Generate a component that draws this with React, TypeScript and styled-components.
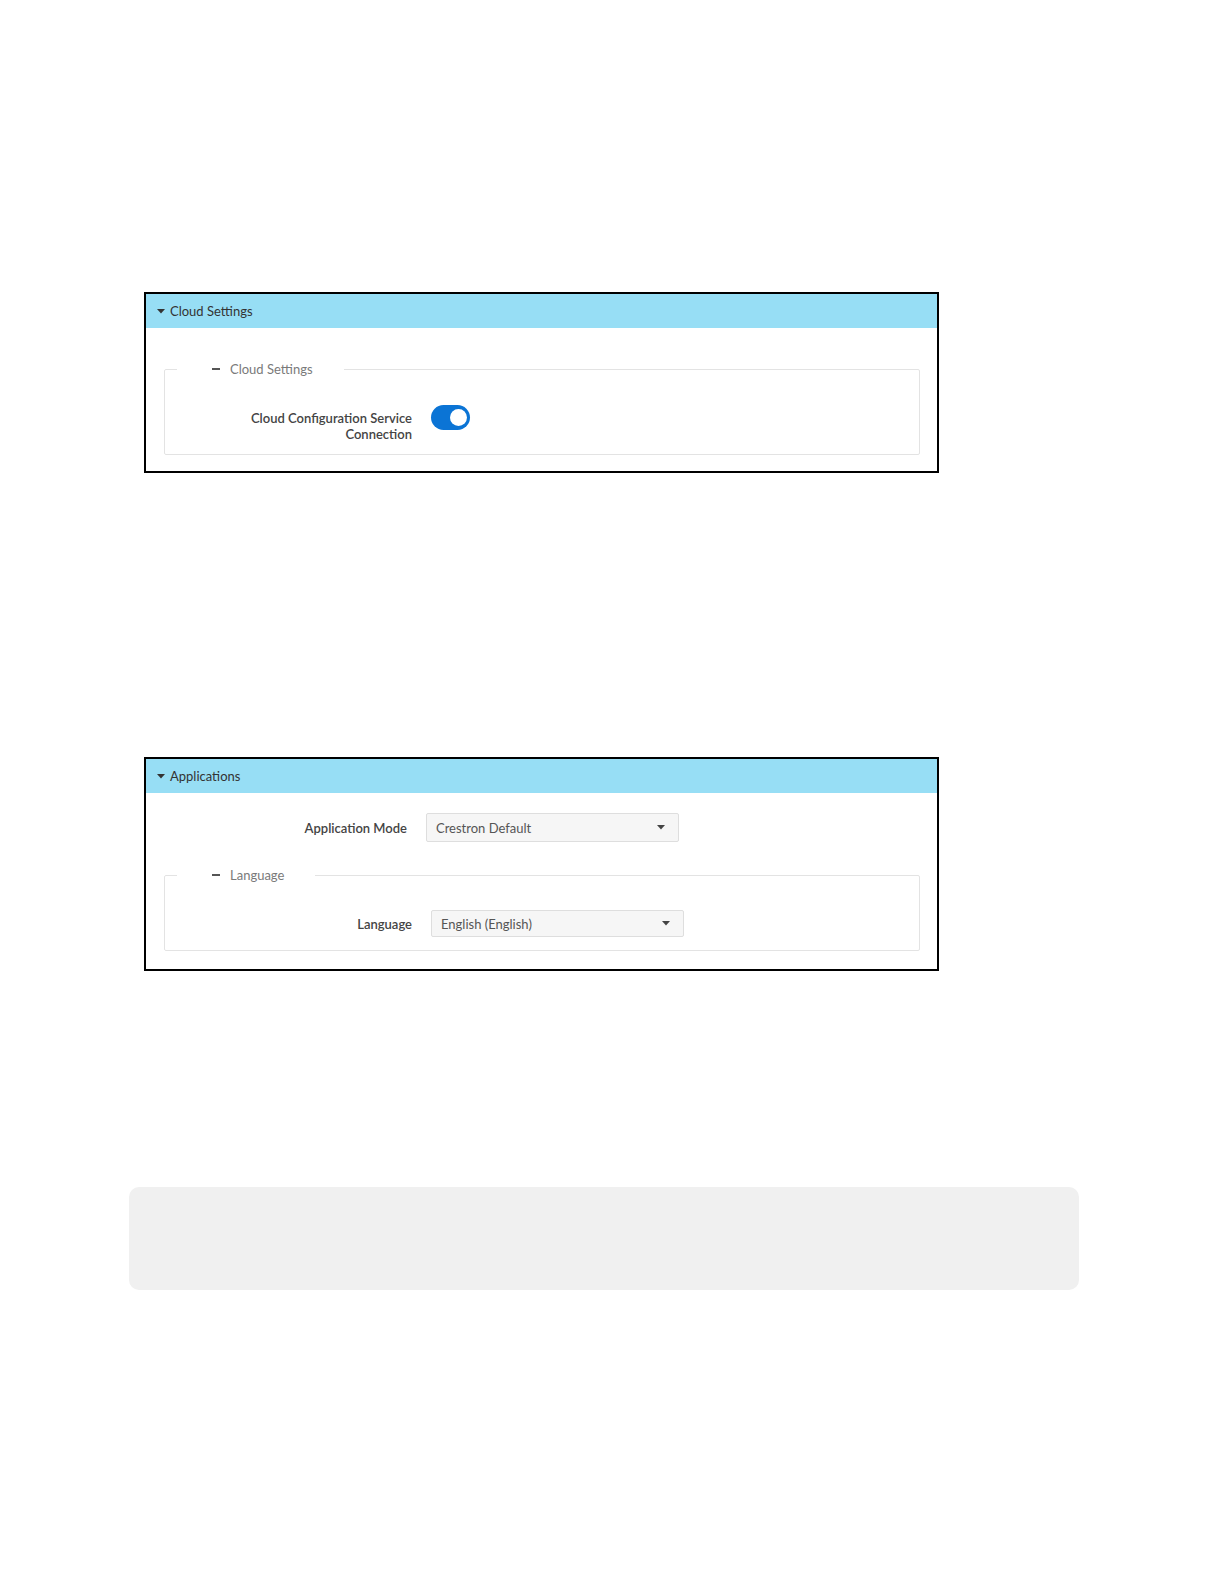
import styled, { createGlobalStyle } from "styled-components";

const GlobalStyle = createGlobalStyle`
  body {
    margin: 0;
    background: #ffffff;
    font-family: Lato, "Open Sans", sans-serif;
    color: #333333;
  }
`;

const Page = styled.div`
  display: flex;
  flex-direction: column;
  padding-top: 292px;
  min-height: 1584px;
  box-sizing: border-box;
`;

const Panel = styled.section<{ $gapAfter: number }>`
  width: 795px;
  margin-left: 144px;
  margin-bottom: ${(p) => p.$gapAfter}px;
  border: 2px solid #000000;
  box-sizing: border-box;
  background: #ffffff;
`;

const PanelHeader = styled.div`
  height: 34px;
  display: flex;
  align-items: center;
  gap: 5px;
  padding-left: 11px;
  background: #97def5;
  font-size: 13px;
  color: #333333;
`;

const PanelBody = styled.div<{ $padTop: number; $padBottom: number }>`
  padding: ${(p) => p.$padTop}px 17px ${(p) => p.$padBottom}px 18px;
`;

const Group = styled.fieldset<{ $marginTop?: number; $padTop: number; $padBottom: number }>`
  margin: ${(p) => p.$marginTop ?? 0}px 0 0 0;
  padding: ${(p) => p.$padTop}px 0 ${(p) => p.$padBottom}px 0;
  border: 1px solid #e3e3e3;
  border-radius: 2px;
  min-width: 0;
`;

const GroupLegend = styled.legend`
  margin-left: 12px;
  padding: 0 31px 0 35px;
  display: flex;
  align-items: center;
  gap: 10px;
  font-size: 13px;
  line-height: 16px;
  color: #7a7a7a;
`;

const Dash = styled.span`
  display: inline-block;
  width: 8px;
  height: 2px;
  background: #555555;
`;

const Row = styled.div<{ $labelWidth: number; $align?: string }>`
  display: grid;
  grid-template-columns: ${(p) => p.$labelWidth}px auto;
  column-gap: 19px;
  align-items: ${(p) => p.$align ?? "center"};
`;

const Label = styled.div`
  text-align: right;
  font-size: 13px;
  line-height: 16px;
  font-weight: 600;
  color: #444444;
`;

const Toggle = styled.div<{ $on: boolean }>`
  width: 39px;
  height: 25px;
  margin-top: -5px;
  box-sizing: border-box;
  border-radius: 13px;
  padding: 0 3px;
  display: flex;
  align-items: center;
  justify-content: ${(p) => (p.$on ? "flex-end" : "flex-start")};
  background: ${(p) => (p.$on ? "#0b74d5" : "#c8c8c8")};
`;

const Knob = styled.span`
  width: 17px;
  height: 17px;
  border-radius: 50%;
  background: #ffffff;
`;

const Select = styled.div<{ $height: number }>`
  width: 253px;
  height: ${(p) => p.$height}px;
  box-sizing: border-box;
  display: flex;
  align-items: center;
  justify-content: space-between;
  padding: 0 13px 0 9px;
  background: #f6f6f6;
  border: 1px solid #dedede;
  border-radius: 2px;
  font-size: 13px;
  color: #555555;
`;

const NoteBox = styled.div`
  width: 950px;
  height: 103px;
  margin-left: 129px;
  border-radius: 10px;
  background: #f0f0f0;
`;

function Caret({ color = "#333333" }: { color?: string }) {
  return (
    <svg width="8" height="5" viewBox="0 0 8 5">
      <path d="M0 0 L8 0 L4 4.5 Z" fill={color} />
    </svg>
  );
}

export default function App() {
  return (
    <>
      <GlobalStyle />
      <Page>
        <Panel $gapAfter={284}>
          <PanelHeader>
            <Caret />
            <span>Cloud Settings</span>
          </PanelHeader>
          <PanelBody $padTop={33} $padBottom={16}>
            <Group $padTop={33} $padBottom={12}>
              <GroupLegend>
                <Dash />
                Cloud Settings
              </GroupLegend>
              <Row $labelWidth={247} $align="start">
                <Label>
                  Cloud Configuration Service
                  <br />
                  Connection
                </Label>
                <Toggle $on>
                  <Knob />
                </Toggle>
              </Row>
            </Group>
          </PanelBody>
        </Panel>

        <Panel $gapAfter={216}>
          <PanelHeader>
            <Caret />
            <span>Applications</span>
          </PanelHeader>
          <PanelBody $padTop={20} $padBottom={18}>
            <Row $labelWidth={243}>
              <Label>Application Mode</Label>
              <Select $height={29}>
                <span>Crestron Default</span>
                <Caret color="#444444" />
              </Select>
            </Row>
            <Group $marginTop={25} $padTop={27} $padBottom={13}>
              <GroupLegend>
                <Dash />
                Language
              </GroupLegend>
              <Row $labelWidth={247}>
                <Label>Language</Label>
                <Select $height={27}>
                  <span>English (English)</span>
                  <Caret color="#444444" />
                </Select>
              </Row>
            </Group>
          </PanelBody>
        </Panel>

        <NoteBox />
      </Page>
    </>
  );
}
